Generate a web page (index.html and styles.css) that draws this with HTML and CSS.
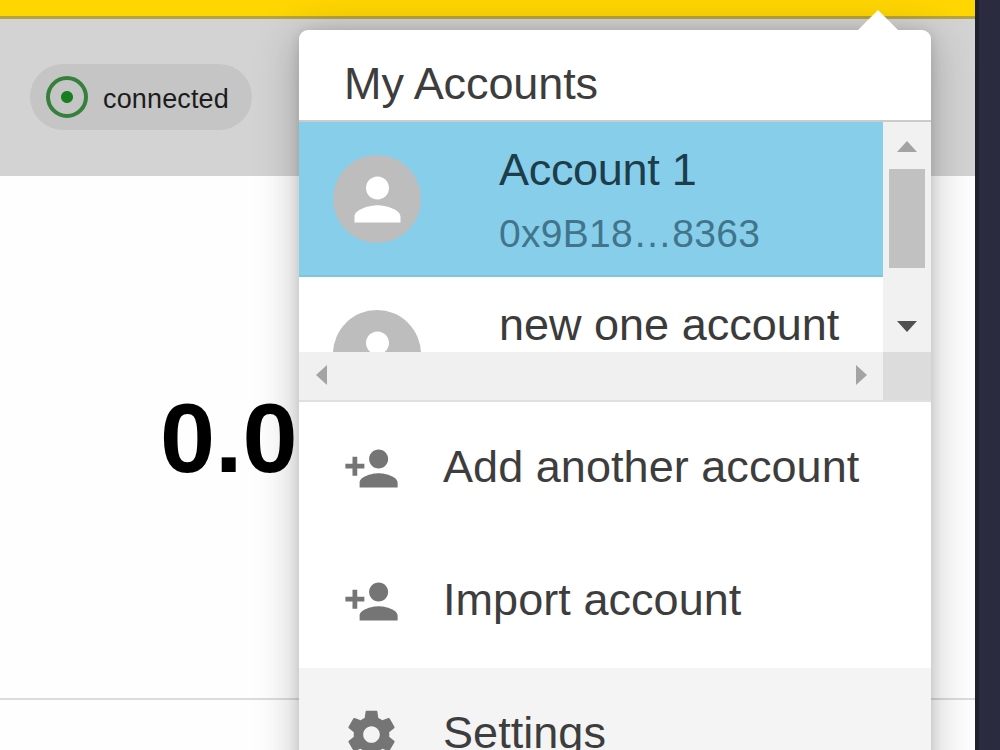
FILE: index.html
```html
<!DOCTYPE html>
<html lang="en">
<head>
<meta charset="utf-8">
<title>My Accounts</title>
<link rel="stylesheet" href="styles.css">
</head>
<body>
<div class="app">
  <main class="wallet">
    <div class="topbar"></div>
    <div class="network">
      <div class="status"><span class="status-ring"></span><span class="status-text">connected</span></div>
    </div>
    <div class="balance">0.0</div>
    <div class="activity"></div>
  </main>
  <aside class="backdrop"></aside>
</div>

<div class="popover">
  <svg class="pointer" viewBox="0 0 42 21"><path d="M0 21L21 0l21 21z"/></svg>
  <h1 class="title">My Accounts</h1>
  <div class="scroller">
    <div class="accounts">
      <div class="account selected">
        <div class="avatar"><svg viewBox="0 0 24 24"><path d="M12 12c2.21 0 4-1.79 4-4s-1.79-4-4-4-4 1.79-4 4 1.79 4 4 4zm0 2c-2.67 0-8 1.34-8 4v2h16v-2c0-2.66-5.33-4-8-4z"/></svg></div>
        <div class="details"><div class="name">Account 1</div><div class="address">0x9B18…8363</div></div>
      </div>
      <div class="account">
        <div class="avatar"><svg viewBox="0 0 24 24"><path d="M12 12c2.21 0 4-1.79 4-4s-1.79-4-4-4-4 1.79-4 4 1.79 4 4 4zm0 2c-2.67 0-8 1.34-8 4v2h16v-2c0-2.66-5.33-4-8-4z"/></svg></div>
        <div class="details"><div class="name">new one account</div></div>
      </div>
    </div>
    <div class="vbar">
      <svg class="arrow-v" viewBox="0 0 20 11"><path d="M0 11L10 0l10 11z"/></svg>
      <div class="thumb"></div>
      <svg class="arrow-v active" viewBox="0 0 20 11"><path d="M0 0h20L10 11z"/></svg>
    </div>
    <div class="hbar">
      <svg class="arrow-h" viewBox="0 0 11 20"><path d="M11 0v20L0 10z"/></svg>
      <svg class="arrow-h" viewBox="0 0 11 20"><path d="M0 0v20l11-10z"/></svg>
    </div>
    <div class="corner"></div>
  </div>
  <div class="item">
    <svg class="icon" viewBox="0 0 24 24"><path d="M15 12c2.21 0 4-1.79 4-4s-1.79-4-4-4-4 1.79-4 4 1.79 4 4 4zm-9-2V7H4v3H1v2h3v3h2v-3h3v-2H6zm9 4c-2.67 0-8 1.34-8 4v2h16v-2c0-2.66-5.33-4-8-4z"/></svg>
    <span class="label">Add another account</span>
  </div>
  <div class="item">
    <svg class="icon" viewBox="0 0 24 24"><path d="M15 12c2.21 0 4-1.79 4-4s-1.79-4-4-4-4 1.79-4 4 1.79 4 4 4zm-9-2V7H4v3H1v2h3v3h2v-3h3v-2H6zm9 4c-2.67 0-8 1.34-8 4v2h16v-2c0-2.66-5.33-4-8-4z"/></svg>
    <span class="label">Import account</span>
  </div>
  <div class="item hovered">
    <svg class="icon" viewBox="0 0 24 24"><path d="M19.43 12.98c.04-.32.07-.64.07-.98s-.03-.66-.07-.98l2.11-1.65c.19-.15.24-.42.12-.64l-2-3.46c-.12-.22-.39-.3-.61-.22l-2.49 1c-.52-.4-1.08-.73-1.69-.98l-.38-2.65C14.46 2.18 14.25 2 14 2h-4c-.25 0-.46.18-.49.42l-.38 2.65c-.61.25-1.17.59-1.69.98l-2.49-1c-.23-.09-.49 0-.61.22l-2 3.46c-.13.22-.07.49.12.64l2.11 1.65c-.04.32-.07.65-.07.98s.03.66.07.98l-2.11 1.65c-.19.15-.24.42-.12.64l2 3.46c.12.22.39.3.61.22l2.49-1c.52.4 1.08.73 1.69.98l.38 2.65c.03.24.24.42.49.42h4c.25 0 .46-.18.49-.42l.38-2.65c.61-.25 1.17-.59 1.69-.98l2.49 1c.23.09.49 0 .61-.22l2-3.46c.12-.22.07-.49-.12-.64l-2.11-1.65zM12 15.5c-1.93 0-3.5-1.57-3.5-3.5s1.57-3.5 3.5-3.5 3.5 1.57 3.5 3.5-1.57 3.5-3.5 3.5z"/></svg>
    <span class="label">Settings</span>
  </div>
</div>
</body>
</html>
```

FILE: styles.css
```css
* { box-sizing: border-box; }

html { height: 100%; overflow: hidden; }

body {
  margin: 0;
  height: 750px;
  overflow: hidden;
  position: relative;
  font-family: "Liberation Sans", Arial, sans-serif;
  background: #fff;
}

svg { display: block; }

.app {
  display: grid;
  grid-template-columns: 975px 25px;
  height: 750px;
}

.wallet {
  display: flex;
  flex-direction: column;
  background: #fefefe;
}

.topbar {
  height: 19px;
  background: #ffd600;
  border-bottom: 3px solid #b7a342;
}

.network {
  height: 157px;
  padding: 45px 30px 0;
  background: #d3d3d3;
}

.status {
  display: flex;
  align-items: center;
  gap: 15px;
  width: 222px;
  height: 66px;
  padding-left: 16px;
  border-radius: 33px;
  background: #c5c5c5;
}

.status-ring {
  width: 42px;
  height: 42px;
  border: 4px solid #35803a;
  border-radius: 50%;
  background: radial-gradient(circle, #168020 5.5px, transparent 6.5px);
}

.status-text {
  font-size: 27px;
  line-height: 30px;
  letter-spacing: .15px;
  padding-top: 3px;
  color: #1c1c1c;
}

.balance {
  flex: 1;
  display: flex;
  align-items: center;
  margin-top: -176px;
  padding: 178px 0 0 160px;
  font-size: 99px;
  font-weight: bold;
  line-height: 110px;
  color: #000;
}

.activity {
  height: 52px;
  border-top: 2px solid #dcdcdc;
}

.backdrop {
  background: #2a2b3f;
  border-left: 4px solid #20212e;
}

.popover {
  position: absolute;
  left: 299px;
  top: 30px;
  width: 632px;
  height: 771px;
  border-radius: 9px;
  background: #fff;
  box-shadow: 0 6px 44px rgba(0, 0, 0, .26), 0 2px 12px rgba(0, 0, 0, .12);
}

.pointer {
  position: absolute;
  left: 558px;
  top: -20px;
  width: 42px;
  height: 21px;
  fill: #fff;
}

.title {
  margin: 0;
  height: 92px;
  padding: 16px 45px 0;
  border-bottom: 2px solid #cbcbcb;
  font-size: 45px;
  font-weight: normal;
  line-height: 75px;
  letter-spacing: -.1px;
  color: #3d3d3d;
}

.scroller {
  display: grid;
  grid-template-columns: 584px 48px;
  grid-template-rows: 230px 48px;
  border-bottom: 2px solid #e0e0e0;
  height: 280px;
}

.accounts { overflow: hidden; }

.account {
  display: flex;
  height: 155px;
  padding: 0 34px;
  gap: 78px;
  color: #3b3b3b;
}

.selected {
  background: #87ceea;
  border-bottom: 2px solid #7dc5e3;
  color: #1d3d4b;
}

.selected .name { letter-spacing: -.3px; }

.avatar {
  flex: none;
  display: grid;
  place-items: center;
  width: 88px;
  height: 88px;
  margin-top: 33px;
  border-radius: 50%;
  background: #bdbdbd;
}

.avatar svg {
  width: 69px;
  height: 69px;
  fill: #fff;
}

.details { padding-top: 22px; white-space: nowrap; }

.name { font-size: 45px; line-height: 52px; }

.address {
  margin-top: 11px;
  font-size: 39px;
  line-height: 53px;
  letter-spacing: .3px;
  color: #41758b;
}

.vbar {
  display: flex;
  flex-direction: column;
  align-items: center;
  padding: 19px 0 20px;
  background: #f1f1f1;
}

.arrow-v { width: 20px; height: 11px; fill: #a3a3a3; }
.active { margin-top: auto; fill: #505050; }

.thumb {
  width: 36px;
  height: 99px;
  margin-top: 17px;
  background: #c1c1c1;
}

.hbar {
  display: flex;
  align-items: center;
  justify-content: space-between;
  padding: 0 16px 2px 17px;
  background: #f0f0f0;
}

.arrow-h { width: 11px; height: 20px; fill: #a3a3a3; }

.corner { background: #dcdcdc; }

.item {
  display: flex;
  align-items: center;
  gap: 43px;
  height: 133px;
  padding: 0 44px;
}

.hovered { background: #f4f4f4; }

.icon { width: 57px; height: 57px; fill: #757575; }

.label {
  padding-bottom: 4px;
  font-size: 45px;
  line-height: 54px;
  letter-spacing: .05px;
  color: #3d3d3d;
}
```
